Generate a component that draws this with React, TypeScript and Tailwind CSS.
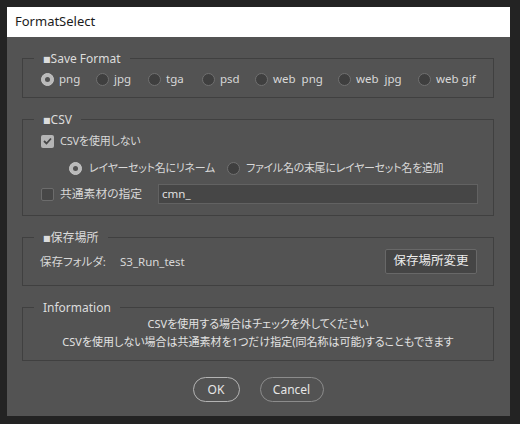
import React from "react";

const font = "font-['Noto_Sans','Noto_Sans_CJK_JP',sans-serif] [font-feature-settings:'palt']";

function Radio({ on }: { on?: boolean }) {
  return on ? (
    <span className="w-[13px] h-[13px] rounded-full bg-[#bababa] border border-[#c6c6c6] flex items-center justify-center shrink-0">
      <span className="w-[5px] h-[5px] rounded-full bg-[#525252]" />
    </span>
  ) : (
    <span className="w-[13px] h-[13px] rounded-full bg-[#3f3f3f] border border-[#707070] shrink-0" />
  );
}

function Check({ on }: { on?: boolean }) {
  return on ? (
    <span className="w-[13px] h-[13px] rounded-[2px] bg-[#b5b5b5] flex items-center justify-center shrink-0">
      <svg width="9" height="8" viewBox="0 0 9 8">
        <path d="M1 4 L3.5 6.5 L8 1.5" fill="none" stroke="#464646" strokeWidth="1.8" />
      </svg>
    </span>
  ) : (
    <span className="w-[13px] h-[13px] rounded-[2px] bg-[#474747] border border-[#6c6c6c] shrink-0" />
  );
}

function Legend({ children }: { children: React.ReactNode }) {
  return (
    <span className="absolute top-[-7px] left-[11px] px-[9px] bg-[#535353] leading-[14px] text-[12px] text-[#dcdcdc] whitespace-pre">
      {children}
    </span>
  );
}

const Sq = () => <span className="text-[8px] font-['DejaVu_Sans'] align-[1px]">■</span>;

export default function App() {
  const formats = [
    { l: "png", w: "w-[55px]", on: true },
    { l: "jpg", w: "w-[52px]" },
    { l: "tga", w: "w-[54px]" },
    { l: "psd", w: "w-[53px]" },
    { l: "web  png", w: "w-[83px]" },
    { l: "web  jpg", w: "w-[80px]" },
    { l: "web gif", w: "" },
  ];
  return (
    <div className={`w-[520px] h-[424px] bg-[#232323] pt-[7px] pl-[7px] ${font}`}>
      <div className="w-[503px] h-[409px] bg-[#535353] flex flex-col">
        <div className="h-[30px] bg-white flex items-center pl-[8px] text-[13px] text-[#1c1c1c]">
          FormatSelect
        </div>
        <div className="flex flex-col pl-[15px] pr-[16px] text-[12px] text-[#d8d8d8]">
          {/* Save Format */}
          <div className="relative mt-[21px] h-[40px] border border-[#404040] flex items-center pl-[18px] pt-[2px] text-[11.5px]">
            <Legend>
              <Sq />Save Format
            </Legend>
            {formats.map((f) => (
              <div key={f.l} className={`flex items-center gap-[5px] ${f.w}`}>
                <Radio on={f.on} />
                <span className="whitespace-pre leading-[16px]">{f.l}</span>
              </div>
            ))}
          </div>

          {/* CSV */}
          <div className="relative mt-[21px] h-[97px] border border-[#404040] flex flex-col pt-[11px] pl-[18px]">
            <Legend>
              <Sq />CSV
            </Legend>
            <div className="h-[20px] flex items-center gap-[6px]">
              <Check on />
              <span className="text-[11px] tracking-[-0.2px]">CSVを使用しない</span>
            </div>
            <div className="h-[20px] mt-[7px] flex items-center pl-[28px] text-[11px] tracking-[-0.3px] whitespace-nowrap">
              <div className="flex items-center gap-[7px] w-[158px]">
                <Radio on />
                <span>レイヤーセット名にリネーム</span>
              </div>
              <div className="flex items-center gap-[6px]">
                <Radio />
                <span>ファイル名の末尾にレイヤーセット名を追加</span>
              </div>
            </div>
            <div className="h-[20px] mt-[6px] flex items-center">
              <div className="flex items-center gap-[6px] w-[117px]">
                <Check />
                <span className="text-[11.8px]">共通素材の指定</span>
              </div>
              <div className="w-[320px] h-[20px] bg-[#464646] border border-[#626262] flex items-center pl-[3px] text-[11.5px] text-[#e0e0e0]">
                cmn_
              </div>
            </div>
          </div>

          {/* 保存場所 */}
          <div className="relative mt-[21px] h-[49px] border border-[#404040] flex items-center pl-[17px] pr-[16px] text-[11.5px]">
            <Legend>
              <Sq />保存場所
            </Legend>
            <span className="w-[80px]">保存フォルダ:</span>
            <span>S3_Run_test</span>
            <div className="ml-auto w-[92px] h-[25px] bg-[#454545] border border-[#686868] rounded-[2px] flex items-center justify-center text-[12.5px] text-[#ececec]">
              保存場所変更
            </div>
          </div>

          {/* Information */}
          <div className="relative mt-[21px] h-[54px] border border-[#404040] flex flex-col items-center pt-[7px] leading-[18px] text-[11px] text-[#e2e2e2] whitespace-nowrap">
            <Legend>Information</Legend>
            <span>CSVを使用する場合はチェックを外してください</span>
            <span>CSVを使用しない場合は共通素材を1つだけ指定(同名称は可能)することもできます</span>
          </div>

          {/* Buttons */}
          <div className="mt-[16px] flex justify-center gap-[20px] text-[12px]">
            <div className="w-[47px] h-[25px] rounded-full border border-[#b4b4b4] flex items-center justify-center text-[#e6e6e6]">
              OK
            </div>
            <div className="w-[64px] h-[25px] rounded-full border border-[#8c8c8c] flex items-center justify-center text-[#e6e6e6]">
              Cancel
            </div>
          </div>
        </div>
      </div>
    </div>
  );
}
